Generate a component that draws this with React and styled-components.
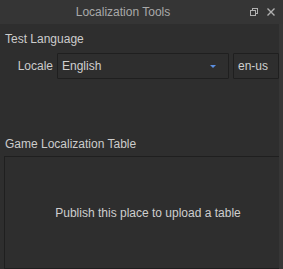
import React from 'react';
import styled, { createGlobalStyle } from 'styled-components';

const GlobalStyle = createGlobalStyle`
  html, body {
    margin: 0;
    padding: 0;
    background: #2e2e2e;
    overflow: hidden;
  }
  body {
    font-family: "Liberation Sans", Arial, sans-serif;
    font-size: 12px;
  }
`;

const Window = styled.div`
  width: 283px;
  height: 269px;
  display: flex;
  flex-direction: column;
  background: #2e2e2e;
  overflow: hidden;
`;

const TitleBar = styled.div`
  height: 24px;
  flex: none;
  display: grid;
  grid-template-columns: 246px 1fr;
  align-items: center;
  background: #353535;
  color: #a9a9a9;
  font-size: 12px;
`;

const Title = styled.div`
  text-align: center;
`;

const TitleButtons = styled.div`
  display: flex;
  gap: 9px;
  align-items: center;
  padding-left: 4px;
`;

const Body = styled.div`
  flex: 1;
  display: grid;
  grid-template-columns: 1fr 4px;
  min-height: 0;
`;

const Gutter = styled.div`
  background: #363636;
`;

const Content = styled.div`
  display: flex;
  flex-direction: column;
  padding: 7px 0 0 5px;
  color: #cccccc;
  min-width: 0;
  overflow: hidden;
`;

const Heading = styled.div`
  line-height: 16px;
  margin-top: ${p => p.$top || 0}px;
`;

const Row = styled.div`
  display: flex;
  align-items: center;
  height: 26px;
  margin-top: 6px;
  gap: 4px;
`;

const Label = styled.div`
  width: 49px;
  text-align: right;
`;

const Field = styled.div`
  height: 26px;
  box-sizing: border-box;
  border: 1px solid #1f1f1f;
  border-radius: 1px;
  display: flex;
  align-items: center;
  padding: 0 ${p => p.$padRight || 4}px 0 4px;
  width: ${p => p.$width}px;
  flex: none;
  white-space: nowrap;
`;

const FieldText = styled.span`
  flex: 1;
  color: #d0d0d0;
`;

const Arrow = styled.span`
  width: 0;
  height: 0;
  border-left: 3px solid transparent;
  border-right: 3px solid transparent;
  border-top: 3px solid #5b8ee0;
`;

const TableBox = styled.div`
  margin-top: 4px;
  margin-left: -1px;
  height: 120px;
  border: 1px solid #1f1f1f;
  border-right: none;
  display: flex;
  align-items: center;
  justify-content: center;
  padding-left: 12px;
  color: #cfcfcf;
`;

const RestoreIcon = () => (
  <svg width="8" height="8" viewBox="0 0 8 8">
    <rect x="2.5" y="0.5" width="5" height="5" fill="none" stroke="#b0b0b0" />
    <rect x="0.5" y="2.5" width="5" height="5" fill="#353535" stroke="#b0b0b0" />
  </svg>
);

const CloseIcon = () => (
  <svg width="8" height="8" viewBox="0 0 8 8">
    <path d="M0.5 0.5 L7.5 7.5 M7.5 0.5 L0.5 7.5" stroke="#b0b0b0" strokeWidth="1.4" />
  </svg>
);

export default function App() {
  return (
    <Window>
      <GlobalStyle />
      <TitleBar>
        <Title>Localization Tools</Title>
        <TitleButtons>
          <RestoreIcon />
          <CloseIcon />
        </TitleButtons>
      </TitleBar>
      <Body>
        <Content>
          <Heading>Test Language</Heading>
          <Row>
            <Label>Locale</Label>
            <Field $width={172} $padRight={12}>
              <FieldText>English</FieldText>
              <Arrow />
            </Field>
            <Field $width={46}>
              <FieldText>en-us</FieldText>
            </Field>
          </Row>
          <Heading $top={57}>Game Localization Table</Heading>
          <TableBox>Publish this place to upload a table</TableBox>
        </Content>
        <Gutter />
      </Body>
    </Window>
  );
}
